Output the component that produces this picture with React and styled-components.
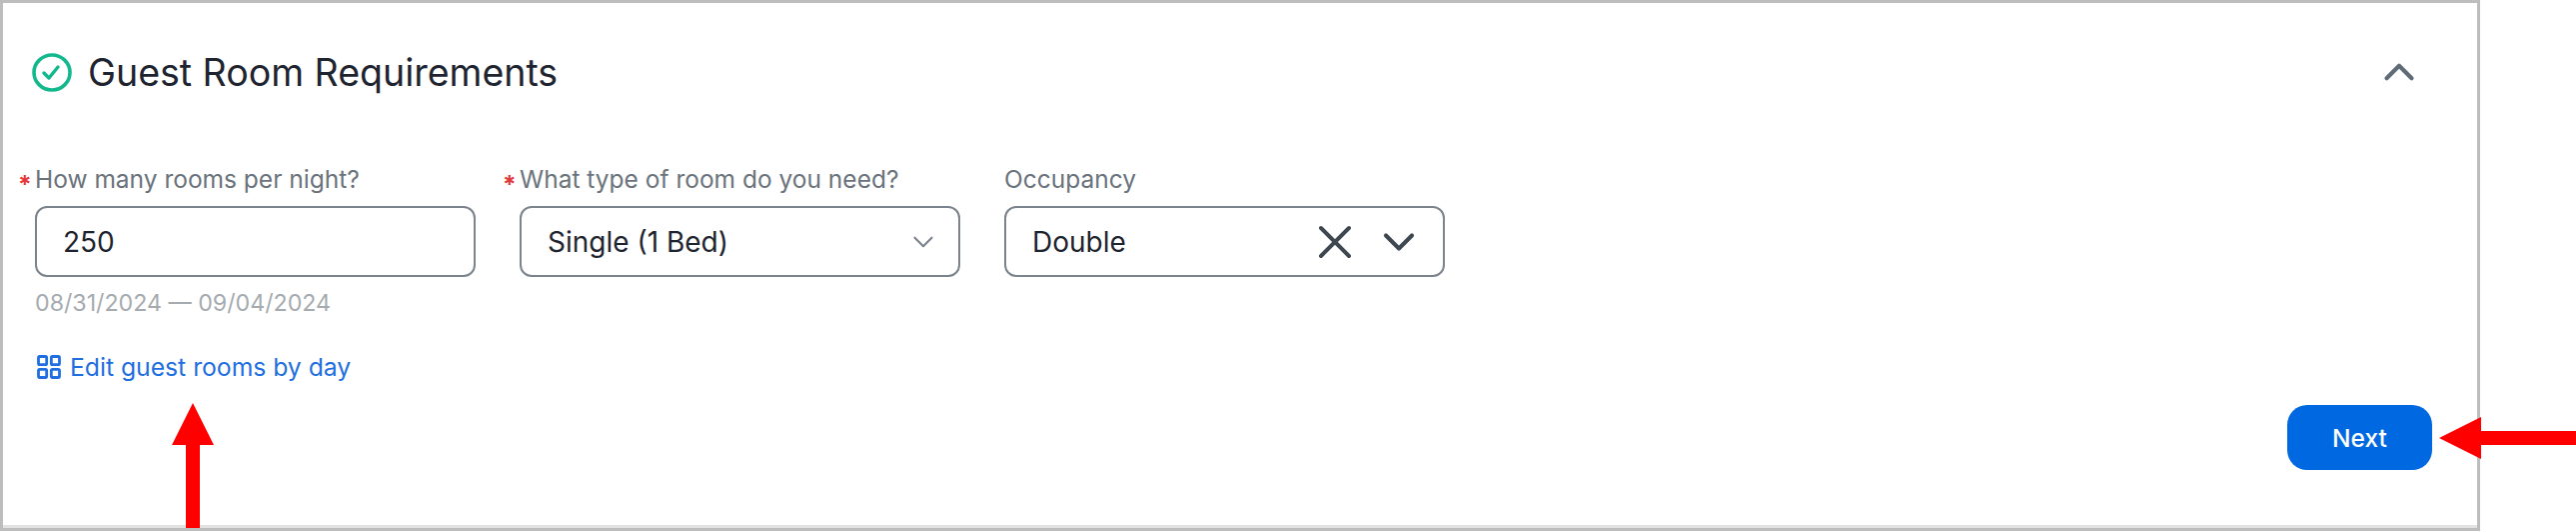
import React from 'react'
import styled, {createGlobalStyle} from 'styled-components'
import {ChevronDown, ChevronUp, LayoutGrid, X} from 'lucide-react'

const GlobalStyle = createGlobalStyle`
    html, body {
        margin: 0;
        padding: 0;
        background: #fff;
    }
    body {
        font-family: Inter, "Liberation Sans", sans-serif;
    }
`

const CheckBadge = () => (
    <svg width="40" height="39" viewBox="0 0 40 39" fill="none">
        <ellipse cx="20" cy="19.5" rx="18" ry="17.5" stroke="#14b88f" strokeWidth="3.6" />
        <path d="M12 20l5 5 9-11" stroke="#14b88f" strokeWidth="3.4" strokeLinecap="round" strokeLinejoin="round" />
    </svg>
)

const UpArrow = () => (
    <svg width="42" height="125" viewBox="0 0 42 125">
        <path d="M21 0L42 42H28V125H14V42H0Z" fill="#ff0000" />
    </svg>
)

const LeftArrow = () => (
    <svg width="137" height="42" viewBox="0 0 137 42">
        <path d="M0 21L42 0V14H137V28H42V42Z" fill="#ff0000" />
    </svg>
)

const App = () => (
    <Page>
        <GlobalStyle />
        <Card>
            <Header>
                <HeaderLeft>
                    <CheckBadge />
                    <Title>Guest Room Requirements</Title>
                </HeaderLeft>
                <Collapse>
                    <ChevronUp size={50} strokeWidth={2} />
                </Collapse>
            </Header>
            <Fields>
                <Field>
                    <Label required>How many rooms per night?</Label>
                    <Control>
                        <Value>250</Value>
                    </Control>
                    <Hint>08/31/2024 — 09/04/2024</Hint>
                </Field>
                <Field>
                    <Label required>What type of room do you need?</Label>
                    <Control>
                        <Value>Single (1 Bed)</Value>
                        <SmallCaret>
                            <ChevronDown size={34} strokeWidth={1.5} />
                        </SmallCaret>
                    </Control>
                </Field>
                <Field>
                    <Label>Occupancy</Label>
                    <Control>
                        <Value>Double</Value>
                        <Actions>
                            <X size={56} strokeWidth={1.7} />
                            <ChevronDown size={52} strokeWidth={1.9} />
                        </Actions>
                    </Control>
                </Field>
            </Fields>
            <EditLink href="#">
                <LayoutGrid size={28} strokeWidth={2.4} />
                Edit guest rooms by day
            </EditLink>
            <Footer>
                <NextButton>Next</NextButton>
            </Footer>
        </Card>
        <ArrowUpSpot>
            <UpArrow />
        </ArrowUpSpot>
        <ArrowLeftSpot>
            <LeftArrow />
        </ArrowLeftSpot>
    </Page>
)

export default App

const Page = styled.div`
    position: relative;
    width: 2578px;
    height: 532px;
    overflow: hidden;
    background: #fff;
`
const Card = styled.div`
    box-sizing: border-box;
    width: 2482px;
    height: 531px;
    border: 3px solid #bdbdbd;
    padding: 47px 0 0 32px;
    display: flex;
    flex-direction: column;
    box-shadow: inset 0 -3px 0 #e2e2e2;
`
const Header = styled.div`
    display: flex;
    align-items: center;
    justify-content: space-between;
    height: 44px;
    padding-right: 53px;
`
const HeaderLeft = styled.div`
    display: flex;
    align-items: center;
    gap: 16px;
    margin-left: -3px;
`
const Title = styled.h2`
    margin: 0;
    font-size: 37.5px;
    font-weight: 400;
    color: #1f2530;
`
const Collapse = styled.div`
    display: flex;
    color: #5f6b76;
`
const Fields = styled.div`
    display: flex;
    gap: 44px;
    margin-top: 69px;
`
const Field = styled.div`
    display: flex;
    flex-direction: column;
    width: 441px;
`
const Label = styled.label`
    position: relative;
    font-size: 24.5px;
    line-height: 32px;
    color: #6b737c;
    ${(p) =>
        p.required &&
        `&::before {
            content: '*';
            position: absolute;
            left: -17px;
            top: 5px;
            font-weight: 700;
            color: #e5383b;
        }`}
`
const Control = styled.div`
    box-sizing: border-box;
    height: 71px;
    margin-top: 11px;
    border: 2px solid #7b838c;
    border-radius: 12px;
    padding: 0 18px 0 26px;
    display: flex;
    align-items: center;
    justify-content: space-between;
`
const Value = styled.span`
    font-size: 28px;
    color: #1f2530;
`
const SmallCaret = styled.span`
    display: flex;
    color: #7b838c;
`
const Actions = styled.span`
    display: flex;
    align-items: center;
    gap: 10px;
    color: #3f4850;
`
const Hint = styled.div`
    margin-top: 11px;
    font-size: 23.2px;
    line-height: 30px;
    color: #a6abb0;
`
const EditLink = styled.a`
    display: flex;
    align-items: center;
    gap: 7px;
    width: fit-content;
    margin-top: 31px;
    font-size: 24.7px;
    line-height: 36px;
    color: #1f6fe0;
    text-decoration: none;
`
const Footer = styled.div`
    display: flex;
    justify-content: flex-end;
    padding-right: 45px;
    margin-top: 20px;
`
const NextButton = styled.button`
    width: 145px;
    height: 65px;
    border: none;
    border-radius: 20px;
    background: #0068e0;
    color: #fff;
    font-family: inherit;
    font-size: 24.5px;
    font-weight: 500;
`
const ArrowUpSpot = styled.div`
    position: absolute;
    left: 172px;
    top: 403px;
    display: flex;
`
const ArrowLeftSpot = styled.div`
    position: absolute;
    left: 2441px;
    top: 417px;
    display: flex;
`
